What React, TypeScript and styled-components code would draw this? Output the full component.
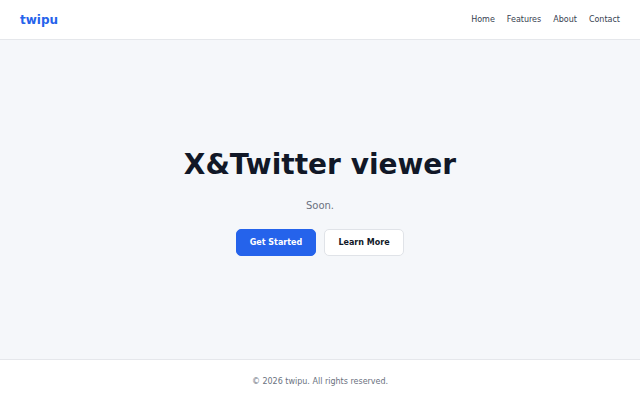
import React from "react";
import styled, { createGlobalStyle } from "styled-components";

const Global = createGlobalStyle`
  html, body { margin: 0; padding: 0; }
  body { font-family: "DejaVu Sans", "Noto Sans", sans-serif; background: #f5f7fa; }
  * { box-sizing: border-box; }
`;

const Page = styled.div`
  min-height: 100vh;
  display: flex;
  flex-direction: column;
`;

const Header = styled.header`
  height: 40px;
  background: #ffffff;
  border-bottom: 1px solid #e5e7eb;
  display: flex;
  align-items: center;
  justify-content: space-between;
  padding: 0 20px;
`;

const Logo = styled.div`
  font-size: 12px;
  font-weight: 700;
  color: #2563eb;
`;

const Nav = styled.nav`
  display: flex;
  gap: 12px;
`;

const NavLink = styled.a`
  font-size: 8px;
  color: #374151;
  text-decoration: none;
`;

const Main = styled.main`
  flex: 1;
  display: flex;
  flex-direction: column;
  align-items: center;
  justify-content: center;
  padding-top: 4px;
`;

const Title = styled.h1`
  margin: 0;
  font-size: 28px;
  line-height: 34px;
  font-weight: 700;
  color: #111827;
`;

const Sub = styled.p`
  margin: 17px 0 16px;
  font-size: 10px;
  line-height: 14px;
  color: #6b7280;
`;

const Buttons = styled.div`
  display: flex;
  gap: 8px;
`;

const Button = styled.button<{ $primary?: boolean }>`
  height: 27px;
  width: 80px;
  padding: 0;
  border-radius: 5px;
  font-family: "DejaVu Sans", sans-serif;
  font-size: 8px;
  font-weight: 700;
  cursor: pointer;
  background: ${(p) => (p.$primary ? "#2563eb" : "#ffffff")};
  color: ${(p) => (p.$primary ? "#ffffff" : "#111827")};
  border: 1px solid ${(p) => (p.$primary ? "#2563eb" : "#e0e3e8")};
`;

const Footer = styled.footer`
  height: 41px;
  background: #ffffff;
  border-top: 1px solid #e5e7eb;
  display: flex;
  align-items: center;
  justify-content: center;
  padding-top: 2px;
  font-size: 8px;
  color: #6b7280;
`;

export default function App() {
  return (
    <>
      <Global />
      <Page>
        <Header>
          <Logo>twipu</Logo>
          <Nav>
            <NavLink href="#">Home</NavLink>
            <NavLink href="#">Features</NavLink>
            <NavLink href="#">About</NavLink>
            <NavLink href="#">Contact</NavLink>
          </Nav>
        </Header>
        <Main>
          <Title>X&amp;Twitter viewer</Title>
          <Sub>Soon.</Sub>
          <Buttons>
            <Button $primary>Get Started</Button>
            <Button>Learn More</Button>
          </Buttons>
        </Main>
        <Footer>© 2026 twipu. All rights reserved.</Footer>
      </Page>
    </>
  );
}
